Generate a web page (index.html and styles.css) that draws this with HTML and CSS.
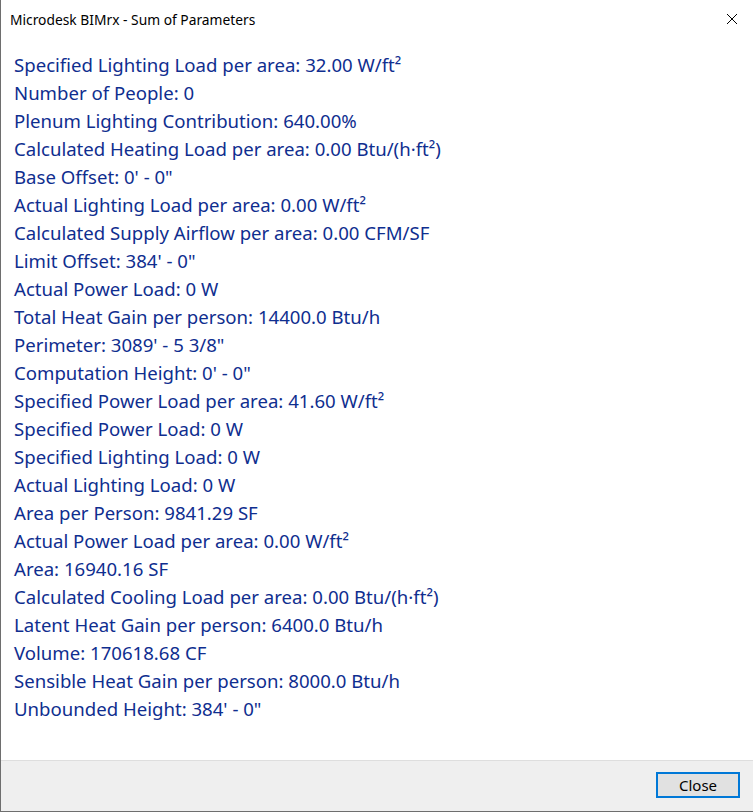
FILE: index.html
```html
<!DOCTYPE html>
<html>
<head>
<meta charset="utf-8">
<link rel="stylesheet" href="styles.css">
</head>
<body>
<div class="window">
  <div class="titlebar">
    <span class="title">Microdesk BIMrx - Sum of Parameters</span>
    <svg class="close-x" width="12" height="12" viewBox="0 0 12 12"><path d="M1 1 L11 11 M11 1 L1 11" stroke="#000" stroke-width="1" fill="none"/></svg>
  </div>
  <div class="content">
    <div class="line">Specified Lighting Load per area: 32.00 W/ft²</div>
    <div class="line">Number of People: 0</div>
    <div class="line">Plenum Lighting Contribution: 640.00%</div>
    <div class="line">Calculated Heating Load per area: 0.00 Btu/(h·ft²)</div>
    <div class="line">Base Offset: 0' - 0"</div>
    <div class="line">Actual Lighting Load per area: 0.00 W/ft²</div>
    <div class="line">Calculated Supply Airflow per area: 0.00 CFM/SF</div>
    <div class="line">Limit Offset: 384' - 0"</div>
    <div class="line">Actual Power Load: 0 W</div>
    <div class="line">Total Heat Gain per person: 14400.0 Btu/h</div>
    <div class="line">Perimeter: 3089' - 5 3/8"</div>
    <div class="line">Computation Height: 0' - 0"</div>
    <div class="line">Specified Power Load per area: 41.60 W/ft²</div>
    <div class="line">Specified Power Load: 0 W</div>
    <div class="line">Specified Lighting Load: 0 W</div>
    <div class="line">Actual Lighting Load: 0 W</div>
    <div class="line">Area per Person: 9841.29 SF</div>
    <div class="line">Actual Power Load per area: 0.00 W/ft²</div>
    <div class="line">Area: 16940.16 SF</div>
    <div class="line">Calculated Cooling Load per area: 0.00 Btu/(h·ft²)</div>
    <div class="line">Latent Heat Gain per person: 6400.0 Btu/h</div>
    <div class="line">Volume: 170618.68 CF</div>
    <div class="line">Sensible Heat Gain per person: 8000.0 Btu/h</div>
    <div class="line">Unbounded Height: 384' - 0"</div>
  </div>
  <div class="footer">
    <button class="btn">Close</button>
  </div>
</div>
</body>
</html>
```
FILE: styles.css
```css
html, body { margin: 0; padding: 0; }
body { width: 753px; height: 812px; overflow: hidden; background: #fff; }
.window {
  box-sizing: border-box;
  width: 753px; height: 812px;
  border-left: 1px solid #6e6e6e;
  border-bottom: 1px solid #6e6e6e;
  display: flex; flex-direction: column;
  font-family: "Noto Sans", "Open Sans", sans-serif;
}
.titlebar {
  height: 38px;
  display: flex; align-items: center; justify-content: space-between;
  padding: 0 15px 2px 9px;
  flex-shrink: 0;
}
.title { font-size: 13.8px; color: #000; }
.close-x { display: block; }
.content {
  flex: 1;
  padding: 11px 0 0 13px;
  color: #0f2e8f;
  font-size: 18.6px;
}
.line { height: 28px; line-height: 28px; white-space: nowrap; }
.footer {
  height: 51px;
  flex-shrink: 0;
  background: #efefef;
  border-top: 1px solid #dedede;
  display: flex; justify-content: flex-end; align-items: flex-start;
  padding: 11px 13px 0 0;
  box-sizing: border-box;
}
.btn {
  width: 84px; height: 26px;
  box-sizing: border-box;
  border: 2px solid #0078d7;
  background: #e1e1e1;
  font-family: "Noto Sans", "Open Sans", sans-serif;
  font-size: 15px; color: #000;
  padding: 0; margin: 0;
}
```
